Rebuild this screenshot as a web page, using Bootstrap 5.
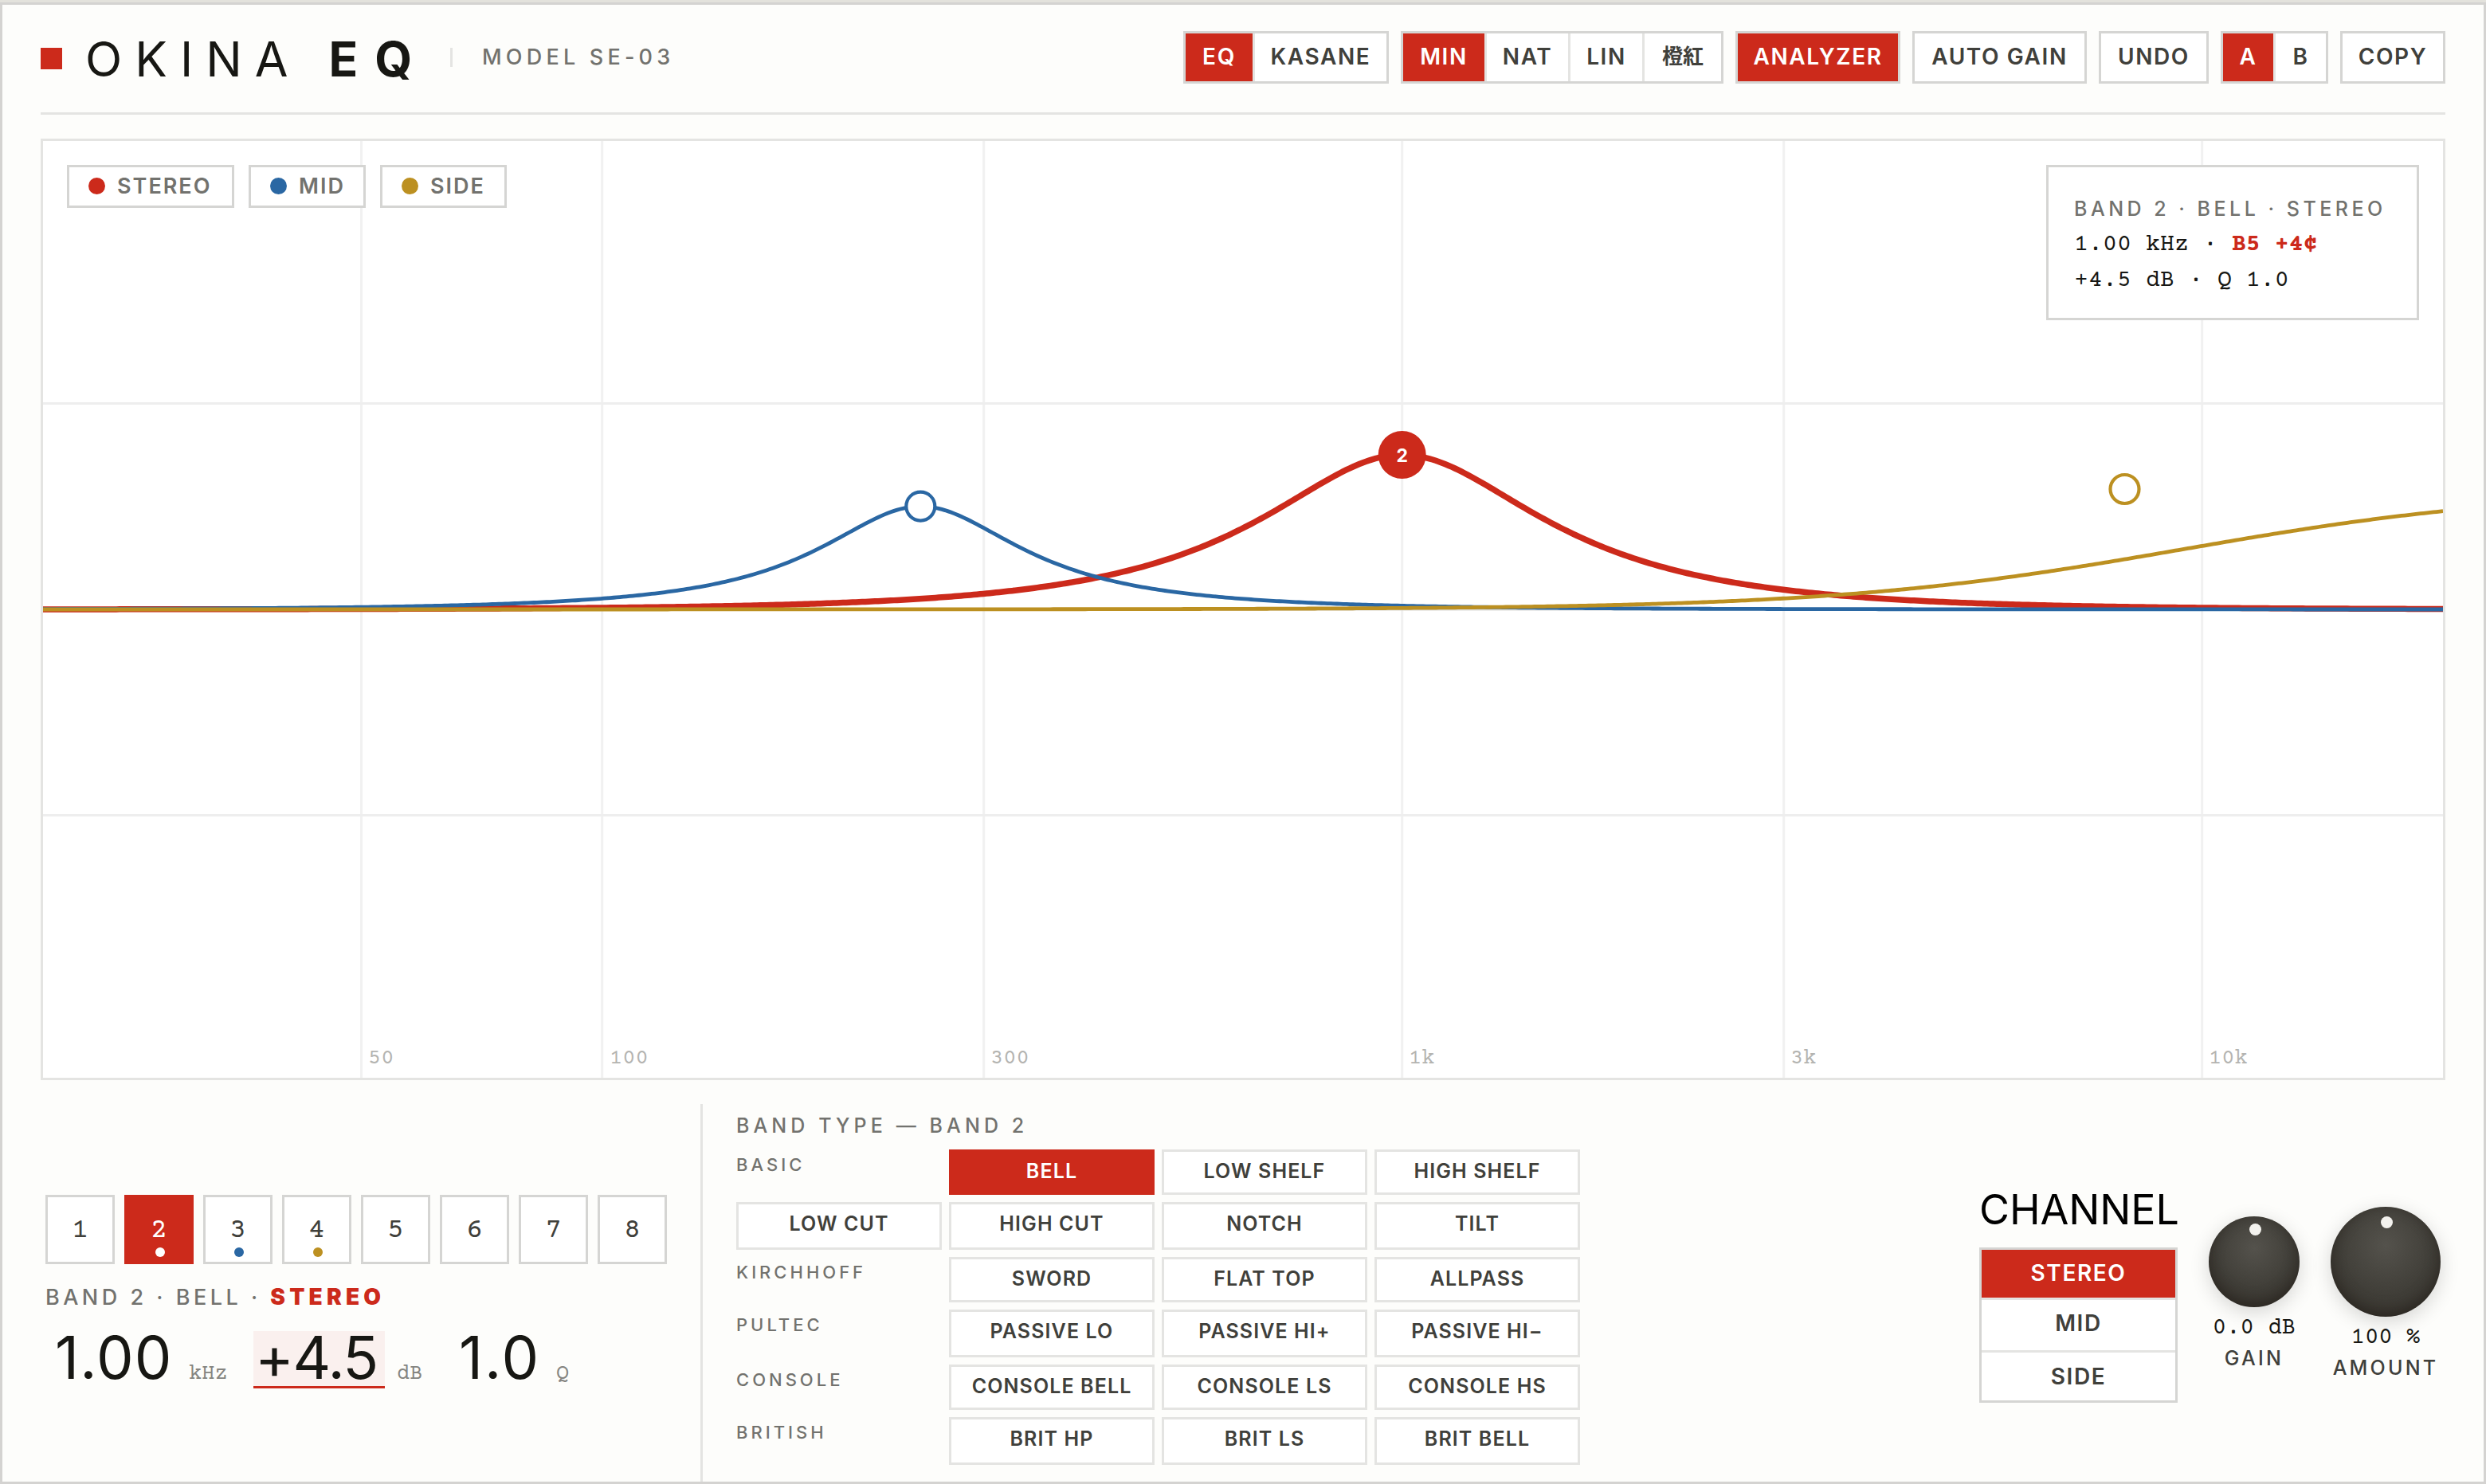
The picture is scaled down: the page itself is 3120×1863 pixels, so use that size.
<!DOCTYPE html>
<html lang="en">
<head>
<meta charset="utf-8">
<meta name="viewport" content="width=device-width, initial-scale=1">
<title>Okina EQ</title>
<link rel="stylesheet" href="https://cdn.jsdelivr.net/npm/bootstrap@5.3.0/dist/css/bootstrap.min.css">
<style>
:root{--red:#cc2a1b;--blue:#2a67a3;--gold:#bc9021;--ink:#171713;--dim:#72726e;--txt:#40403b;--edge:#d5d5d3;--hair:#e4e4e2}
body{background:#e3e2dc;font-family:Inter,"Liberation Sans","Noto Sans CJK JP",sans-serif;color:var(--ink);line-height:1;height:1863px;overflow:hidden;padding-top:3px}
.plugin{height:1860px;background:#fdfdfb;border:3px solid #d4d3d1;padding:0 48px}
.mono{font-family:"Courier Prime","Liberation Mono",monospace}
.topbar{height:138px;border-bottom:3px solid var(--hair);padding-bottom:3px}
.logo-mark{width:27px;height:27px;background:var(--red);margin-top:3px}
.brand-name{font-size:60.5px;font-weight:400;letter-spacing:16px;margin:3px 0 0 29px;line-height:66px;white-space:pre;width:458px}
.brand-name b{font-weight:700;letter-spacing:21px;margin-left:2px}
.brand-sep{width:3px;height:24px;background:var(--hair)}
.model{font-size:27px;font-weight:500;letter-spacing:5.2px;color:var(--dim);margin:-2px 0 0 37px}
.tools{gap:15px}
.seg{border:3px solid var(--edge);background:#fff;height:66px;display:flex}
.seg button{border:0;border-radius:0;padding:0 0 3px;font-size:28px;font-weight:600;letter-spacing:1.6px;color:var(--txt);background:#fff;line-height:1}
.seg button+button{border-left:3px solid var(--hair)}
.seg button.active{background:var(--red);color:#fff}
.graph{height:1182px;margin-top:30px;border:3px solid var(--hair);background:#fff}
.graph>svg{display:block}
.legend-row{top:30px;left:30px;gap:18px}
.legend-tag{height:54px;border:3px solid var(--edge);background:#fff;padding:0 0 1px 24px;font-size:27px;font-weight:600;letter-spacing:2px;color:var(--dim)}
.legend-tag i{width:21px;height:21px;border-radius:50%;margin-right:15px}
.info{top:30px;right:30px;width:468px;height:195px;border:3px solid var(--edge);background:#fff;padding:30px 33px 0 32px;line-height:45px;font-size:30px}
.info .cap-line{font-size:25px;font-weight:500;letter-spacing:4.5px;color:var(--dim);white-space:nowrap}
.info .mono{white-space:pre}
.axis text{font-size:27px;fill:#b4b4b1}
.left-pane{width:831px;padding:114px 0 0 6px;border-right:3px solid var(--hair)}
.bottom{height:474px;margin-top:30px}
.bands{gap:12px}
.band-btn{width:87px;height:87px;border:3px solid var(--edge);background:#fff;color:var(--txt);font-size:36px;padding:3px 0 0;border-radius:0;position:relative;line-height:1}
.band-btn.active{background:var(--red);border-color:var(--red);color:#fff}
.band-btn i{position:absolute;left:36px;bottom:6px;width:12px;height:12px;border-radius:50%}
.band-cap{margin-top:28px;font-size:27px;font-weight:500;letter-spacing:4.5px;color:var(--dim);line-height:27px;white-space:nowrap}
.band-cap b{color:var(--red);font-weight:900;font-size:28px;letter-spacing:5.2px}
.reads{margin-top:29px}
.num{height:72px;font-size:74px;line-height:67px;padding:0 12px;border-bottom:3px solid transparent}
.num.hot{background:#faf0ee;border-color:var(--red);padding:0 2px}
.unit{font-size:27px;color:#858581;line-height:27px;margin-top:41px}
.types{padding:18px 0 0 42px}
.types-title{font-size:25px;font-weight:500;letter-spacing:5.1px;color:var(--dim);line-height:25px;height:39px;margin-top:-3px;margin-bottom:3px}
.type-grid{display:grid;grid-template-columns:repeat(4,258px);grid-template-rows:57px 60px 57px 60px 57px 60px;gap:9px}
.type-grid button{border:3px solid var(--hair);background:#fff;border-radius:0;font-size:25px;font-weight:600;letter-spacing:1.1px;color:var(--txt);padding:0;line-height:1;display:flex;justify-content:center;align-items:flex-start;padding-top:12px}
.type-grid button.active{background:var(--red);border-color:var(--red);color:#fff}
.type-grid span{font-size:22px;font-weight:500;letter-spacing:4px;color:var(--dim);padding-top:8px}
.chan{width:249px;padding-top:105px}
.chan h2{font-size:52px;font-weight:400;color:#000;margin:0 0 0;line-height:55px;height:75px;letter-spacing:-.1px;white-space:nowrap}
.chan .seg{height:195px;flex-direction:column}
.chan .seg button{height:60px}
.chan .seg button+button{border-left:0;border-top:3px solid var(--hair);height:66px;padding-bottom:5px}
.chan .seg button:last-child{height:63px;padding-bottom:0}
.knob-col{display:flex;flex-direction:column;align-items:center;white-space:nowrap}
.knob{border-radius:50%;background:radial-gradient(circle at 50% 35%,#54524c 0,#403e38 55%,#38352f 100%);box-shadow:0 6px 24px rgba(0,0,0,.16),inset 0 -6px 18px rgba(20,12,8,.42);position:relative}
.knob i{position:absolute;left:50%;margin-left:-6px;width:15px;height:15px;border-radius:50%;background:#f3f2ee}
.knob-val{font-size:29px;line-height:28px;margin-top:13px;white-space:pre}
.knob-lab{font-size:25px;font-weight:500;letter-spacing:3.2px;color:var(--txt);line-height:25px;margin-top:11px}
</style>
<script src="https://cdn.jsdelivr.net/npm/bootstrap@5.3.0/dist/js/bootstrap.bundle.min.js"></script>
</head>
<body>
<main class="plugin">
<header class="topbar d-flex align-items-center justify-content-between">
  <div class="d-flex align-items-center">
    <span class="logo-mark"></span>
    <h1 class="brand-name">OKINA <b>EQ</b></h1>
    <span class="brand-sep"></span>
    <span class="model">MODEL SE-03</span>
  </div>
  <div class="tools d-flex">
    <div class="seg"><button class="active" style="width:84px">EQ</button><button style="width:168px">KASANE</button></div>
    <div class="seg"><button class="active" style="width:102px">MIN</button><button style="width:105px">NAT</button><button style="width:93px">LIN</button><button style="width:99px;font-size:26px;letter-spacing:0">橙紅</button></div>
    <div class="seg"><button class="active" style="width:201px">ANALYZER</button></div>
    <div class="seg"><button style="width:213px">AUTO GAIN</button></div>
    <div class="seg"><button style="width:132px">UNDO</button></div>
    <div class="seg"><button class="active" style="width:63px">A</button><button style="width:66px">B</button></div>
    <div class="seg"><button style="width:126px">COPY</button></div>
  </div>
</header>

<section class="graph position-relative">
  <svg width="3012" height="1176" viewBox="0 0 3012 1176" fill="none">
    <g stroke="#f1f1f1" stroke-width="3"><path d="M399.5 0V1176M701.7 0V1176M1180.7 0V1176M1705.7 0V1176M2184.7 0V1176M2709.7 0V1176"/><path stroke="#eeeeee" d="M0 329.5H3012M0 846.5H3012"/><path stroke="#dcdcda" d="M0 588H3012"/></g>
    <g class="axis mono"><text x="408" y="1158">50</text><text x="711" y="1158">100</text><text x="1189" y="1158">300</text><text x="1714" y="1158">1k</text><text x="2193" y="1158">3k</text><text x="2718" y="1158">10k</text></g>
    <path id="curve-stereo" stroke="#cc2a1b" stroke-width="7.5"/>
    <path id="curve-mid" stroke="#2a67a3" stroke-width="4.8"/>
    <path id="curve-side" stroke="#bc9021" stroke-width="4.8"/>
    <circle cx="1101.3" cy="458.6" r="18" fill="#fff" stroke="#2a67a3" stroke-width="4.2"/>
    <circle cx="2612.5" cy="437" r="18" fill="#fff" stroke="#bc9021" stroke-width="4.2"/>
    <circle cx="1705.7" cy="394" r="30" fill="#cc2a1b"/>
    <text x="1705.7" y="402.5" text-anchor="middle" fill="#fff" font-size="23" font-weight="700">2</text>
  </svg>
  <div class="legend-row d-flex position-absolute">
    <div class="legend-tag d-flex align-items-center" style="width:210px"><i style="background:#cc2a1b"></i>STEREO</div>
    <div class="legend-tag d-flex align-items-center" style="width:147px"><i style="background:#2a67a3"></i>MID</div>
    <div class="legend-tag d-flex align-items-center" style="width:159px"><i style="background:#bc9021"></i>SIDE</div>
  </div>
  <div class="info position-absolute">
    <div class="cap-line">BAND 2 · BELL · STEREO</div>
    <div class="mono">1.00 kHz · <b style="color:#cc2a1b">B5 +4¢</b></div>
    <div class="mono">+4.5 dB · Q 1.0</div>
  </div>
</section>

<section class="bottom d-flex">
  <div class="left-pane flex-shrink-0">
    <div class="bands d-flex">
      <button class="band-btn mono">1</button><button class="band-btn mono active">2<i style="background:#fff"></i></button><button class="band-btn mono">3<i style="background:#2a67a3"></i></button><button class="band-btn mono">4<i style="background:#bc9021"></i></button><button class="band-btn mono">5</button><button class="band-btn mono">6</button><button class="band-btn mono">7</button><button class="band-btn mono">8</button>
    </div>
    <div class="band-cap">BAND 2 · BELL · <b>STEREO</b></div>
    <div class="reads d-flex">
      <span class="num" style="width:165px;letter-spacing:1.2px">1.00</span><span class="unit mono" style="width:96px;padding-left:15px">kHz</span>
      <span class="num hot" style="width:165px;letter-spacing:-1.4px">+4.5</span><span class="unit mono" style="width:81px;padding-left:15px">dB</span>
      <span class="num" style="width:119px;letter-spacing:2px">1.0</span><span class="unit mono" style="padding-left:15px">Q</span>
    </div>
  </div>
  <div class="types">
    <div class="types-title">BAND TYPE — BAND 2</div>
    <div class="type-grid">
      <span>BASIC</span><button class="active">BELL</button><button>LOW SHELF</button><button>HIGH SHELF</button>
      <button>LOW CUT</button><button>HIGH CUT</button><button>NOTCH</button><button>TILT</button>
      <span>KIRCHHOFF</span><button>SWORD</button><button>FLAT TOP</button><button>ALLPASS</button>
      <span>PULTEC</span><button>PASSIVE LO</button><button>PASSIVE HI+</button><button>PASSIVE HI−</button>
      <span>CONSOLE</span><button>CONSOLE BELL</button><button>CONSOLE LS</button><button>CONSOLE HS</button>
      <span>BRITISH</span><button>BRIT HP</button><button>BRIT LS</button><button>BRIT BELL</button>
    </div>
  </div>
  <div class="d-flex ms-auto" style="padding-right:6px">
    <div class="chan">
      <h2>CHANNEL</h2>
      <div class="seg"><button class="active">STEREO</button><button>MID</button><button>SIDE</button></div>
    </div>
    <div class="knob-col" style="width:114px;margin-left:39px;padding-top:141px">
      <div class="knob" style="width:114px;height:114px"><i style="top:9px"></i></div>
      <div class="knob-val mono">0.0 dB</div><div class="knob-lab">GAIN</div>
    </div>
    <div class="knob-col" style="width:138px;margin-left:39px;padding-top:129px">
      <div class="knob" style="width:138px;height:138px"><i style="top:12px"></i></div>
      <div class="knob-val mono">100 %</div><div class="knob-lab">AMOUNT</div>
    </div>
  </div>
</section>
</main>
<script>
const W=3012,MID_Y=588,PX_PER_DB=43.12;
// magnitude of an analog peaking filter, in dB
function bell(f,f0,gain,q){const w=f/f0,a=Math.pow(10,gain/40),d=(1-w*w)**2;return 10*Math.log10((d+(w*a/q)**2)/(d+(w/(a*q))**2))}
// smooth high shelf, in dB
function shelf(f,f0,gain){const w=(f/f0)**2;return gain*w/(w+1.4)}
function plot(id,fn){let p='';for(let x=0;x<=W;x+=4){const f=20*Math.pow(1000,x/W);p+=(x?'L':'M')+x+' '+(MID_Y-fn(f)*PX_PER_DB).toFixed(2)}document.getElementById(id).setAttribute('d',p)}
plot('curve-stereo',f=>bell(f,1000,4.5,1));
plot('curve-mid',f=>bell(f,250,3,1.4));
plot('curve-side',f=>shelf(f,8000,3.5));
</script>
</body>
</html>
